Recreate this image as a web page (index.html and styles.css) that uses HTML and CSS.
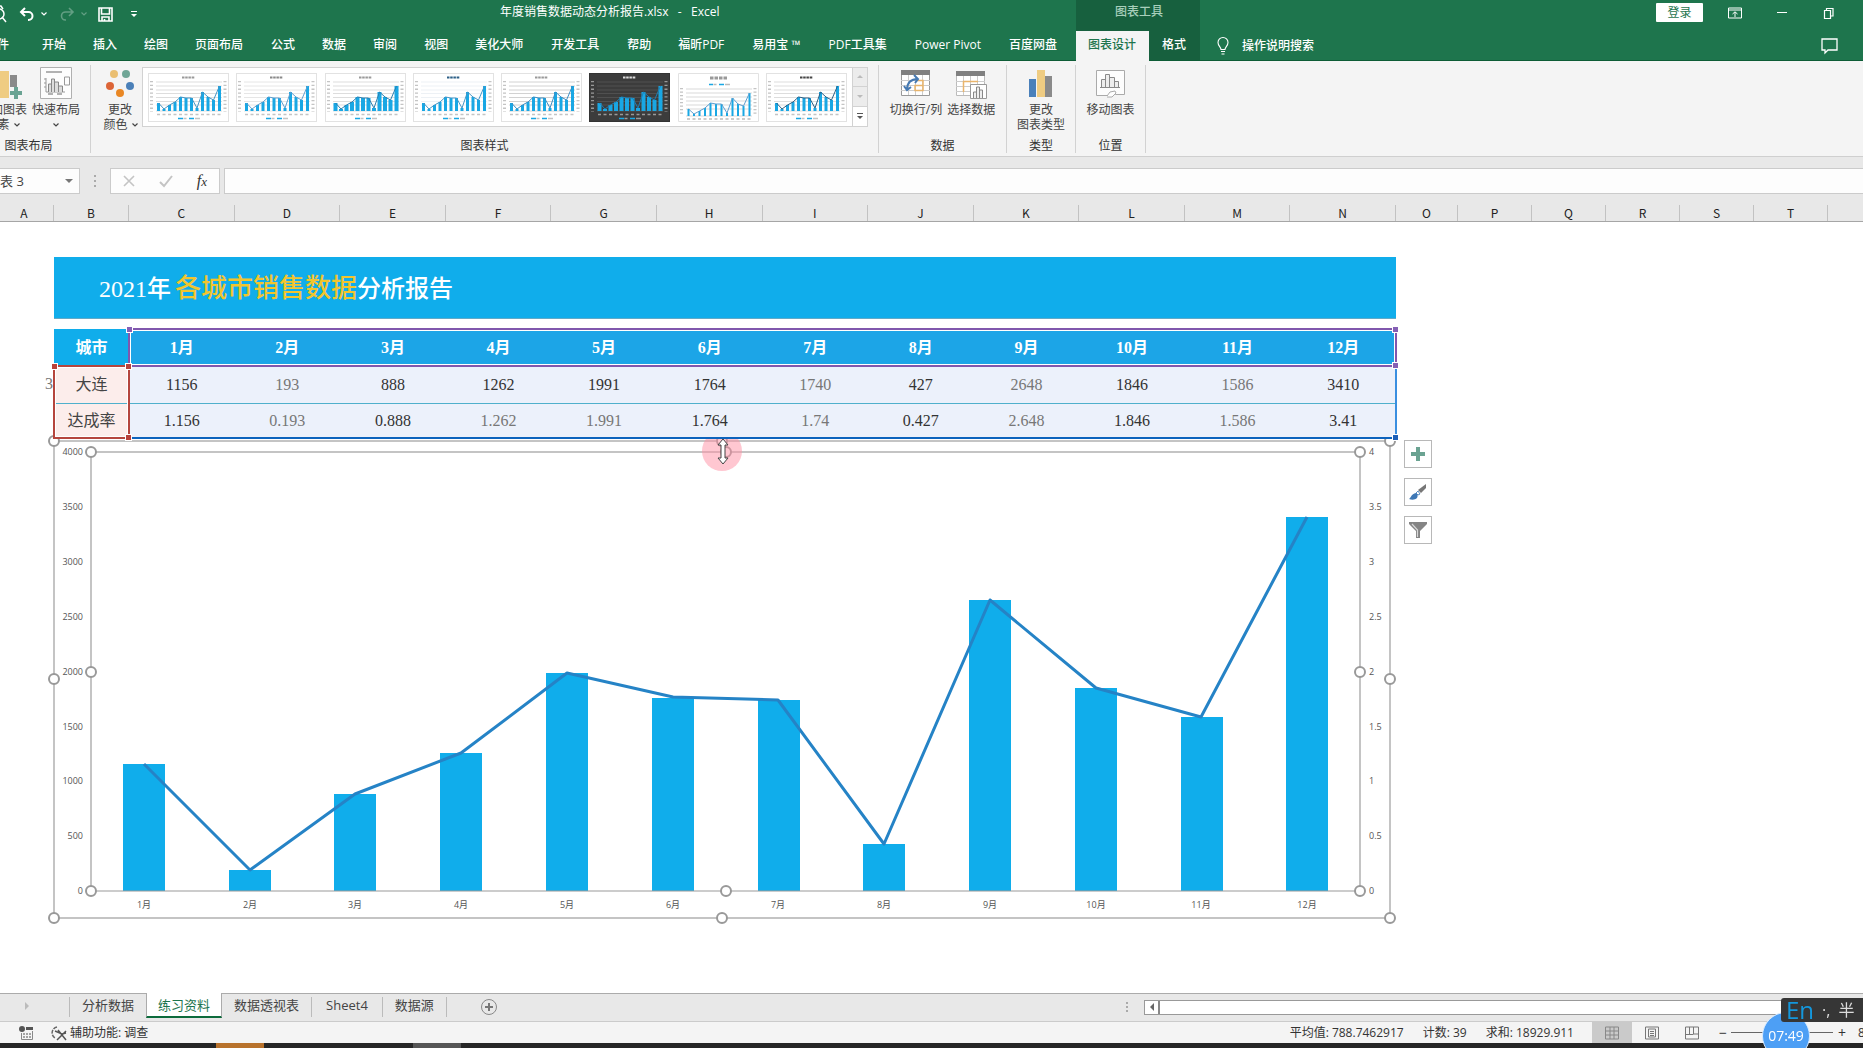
FILE: index.html
```html
<!DOCTYPE html>
<html lang="zh-CN">
<head>
<meta charset="utf-8">
<title>年度销售数据动态分析报告.xlsx - Excel</title>
<link rel="stylesheet" href="styles.css">
</head>
<body>
<svg class="defs" aria-hidden="true">
  <symbol id="chev" viewBox="0 0 8 8"><path d="M1.500 2.500 4 5l2.500-2.500" fill="none" stroke="currentColor" stroke-width="1.200"/></symbol>
  <symbol id="thumb" viewBox="0 0 81 49">
    <rect x=".5" y=".5" width="80" height="48" style="fill:var(--paper,#fff);stroke:var(--edge,#e2e2e2)"/>
    <path d="M34 4.500h13" stroke-width="2" stroke-dasharray="2.500 .7" style="stroke:var(--title,#999)"/>
    <g style="stroke:var(--grid,#d4d4d4)" stroke-width=".8"><path d="M8 9h66M8 13h66M8 17h66M8 20.500h66M8 24.500h66M8 28.500h66M8 32h66M8 38h66"/></g>
    <path d="M3.500 8v31M77 8v31" stroke-width="3" stroke-dasharray="1.300 2.500" style="stroke:var(--ticks,#c4c4c4)"/>
    <path d="M10.500 38v-8M16 38v-2M21.500 38v-6M27 38v-9M32.500 38V24M38 38V25M43.500 38V25M49 38v-3M54.500 38V19M60 38V24M65.500 38V27M71.500 38V13" style="stroke:#19a7e4;stroke-width:var(--bar,3)"/>
    <path d="m10.500 30 5.500 6 5.500-4 5.500-3 5.500-5 5.500 1h5.500L49 35l5.500-16L60 24l5.500 3 6-14" fill="none" style="stroke:var(--line,#4596c6)"/>
    <path d="M9 41.500h64" stroke-width="1.500" stroke-dasharray="3 2.500" style="stroke:var(--ticks,#c4c4c4)"/>
    <path d="M30 45.500h5M41 45.500h5" stroke="#19a7e4" stroke-width="1.500"/><path d="M35.500 45.500h3M47 45.500h5" stroke-width="1.500" style="stroke:var(--ticks,#c4c4c4)"/>
  </symbol>
</svg>

<header class="app-bar">
  <div class="title-row">
    <div class="quick">
      <button class="q-find" aria-label="打印预览"><svg width="6" height="20"><circle cx="-1" cy="10" r="5" fill="none" stroke="#fff" stroke-width="1.500"/><path d="m2 13 4 5M-2 2h3l2 3" stroke="#fff" stroke-width="1.500" fill="none"/></svg></button>
      <button class="q-undo" aria-label="撤销"><svg width="16" height="14" viewBox="0 0 16 14"><path d="M6 1 2 5l4 4M2 5h7.500a4 4 0 0 1 0 8H9" fill="none" stroke="currentColor" stroke-width="2"/></svg></button>
      <button class="q-menu" aria-label="撤销列表"><svg width="8" height="8"><use href="#chev"/></svg></button>
      <button class="q-redo dim" aria-label="恢复"><svg width="16" height="14" viewBox="0 0 16 14"><path d="m10 1 4 4-4 4M14 5H6.500a4 4 0 0 0 0 8H7" fill="none" stroke="currentColor" stroke-width="1.600"/></svg></button>
      <button class="q-menu dim" aria-label="恢复列表"><svg width="8" height="8"><use href="#chev"/></svg></button>
      <button class="q-save" aria-label="保存"><svg width="15" height="15" viewBox="0 0 15 15"><path d="M1 1h13v13H1zM3.500 1v6h8V1M4 14v-4h7v4M6.500 12v2" fill="none" stroke="currentColor" stroke-width="1.600"/></svg></button>
      <button class="q-custom" aria-label="自定义快速访问工具栏"><svg width="8" height="8" viewBox="0 0 8 8"><path d="M1 1.500h6" stroke="currentColor"/><path d="M1 4h6L4 7z" fill="currentColor"/></svg></button>
    </div>
    <h1 class="doc-title">年度销售数据动态分析报告.xlsx &nbsp;&nbsp;- &nbsp;&nbsp;Excel</h1>
    <div class="window-tools">
      <button class="login">登录</button>
      <button aria-label="功能区显示选项"><svg width="14" height="12" viewBox="0 0 14 12"><path d="M.5 1h13v10H.5zM.5 3h13M7 10V5M4.500 7 7 4.800 9.500 7" fill="none" stroke="currentColor"/></svg></button>
      <button aria-label="最小化"><svg width="14" height="12"><path d="M2 5.500h10" stroke="currentColor"/></svg></button>
      <button aria-label="还原"><svg width="14" height="12" viewBox="0 0 14 12"><path d="M2.500 3.500h6v8h-6zM4.500 3V1.500h6.500V9H9" fill="none" stroke="currentColor" stroke-width="1.200"/></svg></button>
    </div>
  </div>
  <nav class="tabs">
    <a class="file" href="#">文件</a><a href="#">开始</a><a href="#">插入</a><a href="#">绘图</a><a class="wide" href="#">页面布局</a><a href="#">公式</a><a href="#">数据</a><a href="#">审阅</a><a href="#">视图</a><a class="wide" href="#">美化大师</a><a class="wide" href="#">开发工具</a><a href="#">帮助</a><a class="wide" href="#">福昕PDF</a><a class="wide" href="#">易用宝 ™</a><a class="wide" href="#">PDF工具集</a><a class="wide" href="#">Power Pivot</a><a class="wide" href="#">百度网盘</a>
    <div class="context"><span class="context-name">图表工具</span><a class="active" href="#">图表设计</a><a href="#">格式</a></div>
    <button class="tell"><svg width="14" height="18" viewBox="0 0 14 18"><path d="M5 12.500c0-2.500-3-3.500-3-7a5 5 0 0 1 10 0c0 3.500-3 4.500-3 7zM5 14.500h4M5.500 17h3" fill="none" stroke="currentColor" stroke-width="1.100"/></svg>操作说明搜索</button>
    <button class="comment" aria-label="批注"><svg width="17" height="16" viewBox="0 0 17 16"><path d="M1 1h15v11H7l-3 3v-3H1z" fill="none" stroke="currentColor" stroke-width="1.300"/></svg></button>
  </nav>
</header>

<section class="ribbon">
  <div class="group g-layout">
    <div class="tools">
      <button class="tool t-add"><svg width="38" height="32" viewBox="0 0 38 32"><path d="M13 4h12v27H13z" fill="#efcc82"/><path d="M26 8h7v12h-7z" fill="#8a8a8a"/><path d="M32 20v12M26 26h12" stroke="#6aa393" stroke-width="4"/></svg><span>添加图表</span><span>元素 <svg width="8" height="8"><use href="#chev"/></svg></span></button>
      <button class="tool"><svg width="32" height="32" viewBox="0 0 32 32"><path d="M.5.5h31v31H.5z" fill="#fdfdfd" stroke="#b0b0b0"/><path d="M6 5h16M8 27h5M17 27h5" stroke="#999" stroke-width="1.500"/><path d="M6 25h19M6 25V11M4 12h2M4 16h2M4 20h2M24.500 10h5v8h-5z" fill="none" stroke="#999"/><path d="M8.500 25v-8h3v8M11.500 25V12h3v13M14.500 25V15h4v10M18.500 25v-6h4v6" fill="#ddd" stroke="#888"/></svg><span>快速布局</span><span><svg width="8" height="8"><use href="#chev"/></svg></span></button>
    </div>
    <div class="group-name">图表布局</div>
  </div>
  <div class="group g-styles">
    <div class="tools">
      <button class="tool t-color"><svg width="32" height="32" viewBox="0 0 32 32"><circle cx="10" cy="7" r="4" fill="#eabf72"/><circle cx="22" cy="7" r="4" fill="#70a696"/><circle cx="6" cy="19" r="4" fill="#dc6537"/><circle cx="26" cy="19" r="4" fill="#4b80b8"/><circle cx="16" cy="26" r="4" fill="#e98724"/></svg><span>更改</span><span>颜色 <svg width="8" height="8"><use href="#chev"/></svg></span></button>
      <div class="gallery">
        <div class="thumbs">
          <button aria-label="样式 1"><svg><use href="#thumb"/></svg></button>
          <button class="s2" aria-label="样式 2"><svg><use href="#thumb"/></svg></button>
          <button class="s3" aria-label="样式 3"><svg><use href="#thumb"/></svg></button>
          <button class="s4" aria-label="样式 4"><svg><use href="#thumb"/></svg></button>
          <button class="s5" aria-label="样式 5"><svg><use href="#thumb"/></svg></button>
          <button class="s6" aria-label="样式 6"><svg><use href="#thumb"/></svg></button>
          <button class="s7" aria-label="样式 7"><svg viewBox="0 0 81 49"><path d="M.5.500h80v48H.5z" fill="#fff" stroke="#e2e2e2"/><path d="M32 5h18" stroke="#999" stroke-width="3" stroke-dasharray="3.500 1"/><path d="M31 11.500h4M41 11.500h5" stroke="#19a7e4" stroke-width="1.500"/><path d="M35.500 11.500h3M47 11.500h5" stroke="#bbb" stroke-width="1.500"/><path d="M8 16h66M8 20h66M8 24h66M8 28h66M8 32h66M8 36h66M8 43h66" stroke="#d9d9d9"/><path d="M3.500 15v28M77 15v28" stroke="#c4c4c4" stroke-width="3" stroke-dasharray="1.300 2.200"/><path d="M10.500 43v-7M16 43v-2M21.500 43v-5M27 43v-8M32.500 43V30M38 43V31M43.500 43V31M49 43v-3M54.500 43V25M60 43V31M65.500 43V33M71.500 43V20" stroke="#19a7e4" stroke-width="2"/><path d="m10.500 36 5.500 5 5.500-3 5.500-3 5.500-5 5.500 1h5.500l5.500 9 5.500-15 5.500 6 5.500 2 6-13" fill="none" stroke="#5f9fd0"/><path d="M9 46h64" stroke="#bbb" stroke-width="1.500" stroke-dasharray="3 2.500"/></svg></button>
          <button class="s8" aria-label="样式 8"><svg><use href="#thumb"/></svg></button>
        </div>
        <div class="gallery-nav">
          <button class="off" aria-label="上一行"><svg width="8" height="8"><path d="M1 5h6L4 2z" fill="#bbb"/></svg></button>
          <button class="off" aria-label="下一行"><svg width="8" height="8"><path d="M1 3h6L4 6z" fill="#bbb"/></svg></button>
          <button aria-label="其他"><svg width="8" height="8"><path d="M1 1.500h6" stroke="#555"/><path d="M1 4h6L4 7z" fill="#555"/></svg></button>
        </div>
      </div>
    </div>
    <div class="group-name">图表样式</div>
  </div>
  <div class="group g-data">
    <div class="tools">
      <button class="tool"><svg width="32" height="32" viewBox="0 0 32 32"><path d="M1.500 3.500h28v25h-28z" fill="#fff" stroke="#999"/><path d="M1 3h29v5H1z" fill="#808080"/><path d="M1 13.500h29M1 18.500h29M1 23.500h29M8.500 8v20M15.500 8v20M22.500 8v20" stroke="#ccc"/><path d="M16 13.500h7v10h-8v-5h8" fill="none" stroke="#e9b56c" stroke-width="1.500"/><path d="M7 23c0-7 3-11 11-11M4 19l3 4 4-3M14 8l4 4-3 4" fill="none" stroke="#4679b2" stroke-width="2"/></svg><span>切换行/列</span></button>
      <button class="tool"><svg width="32" height="32" viewBox="0 0 32 32"><path d="M1.500 4.500h28v24h-28z" fill="#fff" stroke="#bbb"/><path d="M1 4h29v5H1z" fill="#808080"/><path d="M1 14.500h29M1 19.500h29M1 24.500h29M8.500 9v19M15.500 9v19M22.500 9v19" stroke="#ccc"/><path d="M8.500 25V14.500H23" fill="none" stroke="#e9b56c" stroke-width="1.500"/><path d="M15.500 17.500h16v14h-16z" fill="#fff" stroke="#999"/><path d="M18.500 31v-6h3v6M21.500 31V20h3v11M24.500 31v-8h3v8" fill="#eee" stroke="#888"/></svg><span>选择数据</span></button>
    </div>
    <div class="group-name">数据</div>
  </div>
  <div class="group g-type">
    <div class="tools"><button class="tool"><svg width="32" height="32" viewBox="0 0 32 32"><path d="M4 12h7v18H4z" fill="#4a80ba"/><path d="M12 3h8v27h-8z" fill="#efcc82"/><path d="M20 9h7v21h-7z" fill="#8a8a8a"/></svg><span>更改</span><span>图表类型</span></button></div>
    <div class="group-name">类型</div>
  </div>
  <div class="group g-place">
    <div class="tools"><button class="tool"><svg width="32" height="32" viewBox="0 0 32 32"><path d="M2.500 3.500h28v24h-9l-3-2-4 3h-12z" fill="#fdfdfd" stroke="#aaa"/><path d="M7.500 20.500v-8h4v8M11.500 20.500v-13h4v13M15.500 20.500v-10h5v10M20.500 20.500v-6h4v6zM6 20.500h20" fill="#eee" stroke="#8a8a8a"/><path d="m13 29 3-4 5-1 1 2-4 4h-5" fill="#fff" stroke="#aaa"/></svg><span>移动图表</span></button></div>
    <div class="group-name">位置</div>
  </div>
</section>

<section class="formula-row">
  <div class="name-box"><input aria-label="名称框" value="表 3"><svg width="8" height="8"><path d="M0 2h8L4 6z" fill="#777"/></svg></div>
  <svg class="dots" width="4" height="14"><path d="M2 1v2M2 6v2M2 11v2" stroke="#aaa" stroke-width="2"/></svg>
  <div class="formula-tools">
    <button aria-label="取消"><svg width="12" height="12"><path d="m1 1 10 10M11 1 1 11" stroke="#c4c4c4" stroke-width="1.600"/></svg></button>
    <button aria-label="输入"><svg width="14" height="12"><path d="m1 7 4 4 8-10" fill="none" stroke="#c4c4c4" stroke-width="2"/></svg></button>
    <button class="fx" aria-label="插入函数">f<small>x</small></button>
  </div>
  <input class="formula" aria-label="编辑栏">
</section>

<div class="columns">
  <span class="c-a">A</span><span class="c-b">B</span>
  <div class="c-months"><span>C</span><span>D</span><span>E</span><span>F</span><span>G</span><span>H</span><span>I</span><span>J</span><span>K</span><span>L</span><span>M</span><span>N</span></div>
  <span class="c-o">O</span><span class="c-p">P</span><span class="c-p">Q</span><span class="c-p">R</span><span class="c-p">S</span><span class="c-p">T</span><span class="c-end"></span>
</div>

<main class="sheet">
  <div class="report">
    <h2 class="banner">2021年<em>各城市销售数据</em>分析报告</h2>
    <div class="table-wrap">
      <table>
        <thead><tr><th class="city">城市</th><th>1月</th><th>2月</th><th>3月</th><th>4月</th><th>5月</th><th>6月</th><th>7月</th><th>8月</th><th>9月</th><th>10月</th><th>11月</th><th>12月</th></tr></thead>
        <tbody>
          <tr><th>大连</th><td>1156</td><td class="soft">193</td><td>888</td><td>1262</td><td>1991</td><td>1764</td><td class="soft">1740</td><td>427</td><td class="soft">2648</td><td>1846</td><td class="soft">1586</td><td>3410</td></tr>
          <tr><th>达成率</th><td>1.156</td><td class="soft">0.193</td><td>0.888</td><td class="soft">1.262</td><td class="soft">1.991</td><td>1.764</td><td class="soft">1.74</td><td>0.427</td><td class="soft">2.648</td><td>1.846</td><td class="soft">1.586</td><td>3.41</td></tr>
        </tbody>
      </table>
      <span class="row-hint">3</span>
      <div class="sel blue"><i class="br"></i></div>
      <div class="sel purple"><i class="tl"></i><i class="tr"></i><i class="br"></i></div>
      <div class="sel red"><i class="tl"></i><i class="tr"></i><i class="br"></i></div>
    </div>
    <svg class="chart" viewBox="0 0 1342 490" role="img" aria-label="各月销售数据图">
      <g class="frame"><path d="M0 2h1336v477H0z"/><path d="M37 452V13h1269v439"/></g>
      <g class="bars">
        <rect x="69" y="325" width="42" height="127"/><rect x="175" y="431" width="42" height="21"/><rect x="280" y="355" width="42" height="97"/><rect x="386" y="314" width="42" height="138"/><rect x="492" y="234" width="42" height="218"/><rect x="598" y="259" width="42" height="193"/><rect x="704" y="261" width="42" height="191"/><rect x="809" y="405" width="42" height="47"/><rect x="915" y="161" width="42" height="291"/><rect x="1021" y="249" width="42" height="203"/><rect x="1127" y="278" width="42" height="174"/><rect x="1232" y="78" width="42" height="374"/>
      </g>
      <path class="axis" d="M37 452h1269"/>
      <path class="trend" d="m90 325 106 106 105-76 106-41 106-80 106 24 105 3 106 144 106-244 106 88 105 29 106-200"/>
      <g class="labels left"><text x="29" y="16">4000</text><text x="29" y="71">3500</text><text x="29" y="126">3000</text><text x="29" y="181">2500</text><text x="29" y="236">2000</text><text x="29" y="291">1500</text><text x="29" y="345">1000</text><text x="29" y="400">500</text><text x="29" y="455">0</text></g>
      <g class="labels"><text x="1315" y="16">4</text><text x="1315" y="71">3.5</text><text x="1315" y="126">3</text><text x="1315" y="181">2.5</text><text x="1315" y="236">2</text><text x="1315" y="291">1.5</text><text x="1315" y="345">1</text><text x="1315" y="400">0.5</text><text x="1315" y="455">0</text></g>
      <g class="labels mid"><text x="90" y="469">1月</text><text x="196" y="469">2月</text><text x="301" y="469">3月</text><text x="407" y="469">4月</text><text x="513" y="469">5月</text><text x="619" y="469">6月</text><text x="724" y="469">7月</text><text x="830" y="469">8月</text><text x="936" y="469">9月</text><text x="1042" y="469">10月</text><text x="1147" y="469">11月</text><text x="1253" y="469">12月</text></g>
      <g class="knobs">
        <circle cx="0" cy="2" r="5"/><circle cx="668" cy="2" r="5"/><circle cx="1336" cy="2" r="5"/><circle cx="0" cy="240" r="5"/><circle cx="1336" cy="240" r="5"/><circle cx="0" cy="479" r="5"/><circle cx="668" cy="479" r="5"/><circle cx="1336" cy="479" r="5"/>
        <circle cx="37" cy="13" r="5"/><circle cx="672" cy="13" r="5"/><circle cx="1306" cy="13" r="5"/><circle cx="37" cy="233" r="5"/><circle cx="1306" cy="233" r="5"/><circle cx="37" cy="452" r="5"/><circle cx="672" cy="452" r="5"/><circle cx="1306" cy="452" r="5"/>
      </g>
      <circle cx="668" cy="12" r="20" fill="#ff8fa3" fill-opacity=".5"/>
      <path d="m669 0 5 6h-3v13h3l-5 6-5-6h3V6h-3z" fill="#fff" stroke="#444"/>
    </svg>
  </div>
  <div class="chart-tools">
    <button aria-label="图表元素"><svg width="16" height="16"><path d="M8 1v14M1 8h14" stroke="#6ba392" stroke-width="4"/></svg></button>
    <button aria-label="图表样式"><svg width="20" height="20"><path d="M18 2v4l-5 5-3-3z" fill="#777"/><path d="m10 9 2 3-2 1-2-2z" fill="#fff" stroke="#5b8cc0"/><path d="M8 11c2 1 2 3 1 5-2 2-5 2-8 1 2-1 2-5 7-6z" fill="#3e78b6"/></svg></button>
    <button aria-label="图表筛选器"><svg width="20" height="20"><path d="M1 2h18v2l-7 7v7H8v-7L1 4z" fill="#858585"/><path d="m4 4 5.500 6v7" fill="none" stroke="#d8d8d8" stroke-width="1.200"/></svg></button>
  </div>
</main>

<nav class="sheet-tabs">
  <span class="nav-arrow"><svg width="6" height="8"><path d="m1 0 4 4-4 4z" fill="#bbb"/></svg></span>
  <a class="first" href="#">分析数据</a><a class="active" href="#">练习资料</a><a href="#">数据透视表</a><a class="latin" href="#">Sheet4</a><a href="#">数据源</a>
  <button class="new-sheet" aria-label="新工作表"><svg width="18" height="18"><circle cx="9" cy="9" r="7.500" fill="none" stroke="#888"/><path d="M9 5v8M5 9h8" stroke="#777" stroke-width="2"/></svg></button>
  <div class="hscroll"><svg width="4" height="12"><path d="M2 1v2M2 5v2M2 9v2" stroke="#aaa" stroke-width="2"/></svg><div class="track"><button aria-label="向左滚动"><svg width="6" height="8"><path d="M5 0 1 4l4 4z" fill="#666"/></svg></button></div></div>
</nav>

<footer class="status">
  <svg class="macro" width="15" height="14"><circle cx="3" cy="3" r="3" fill="#555"/><path d="M7 1h7v3H7z" fill="#555"/><path d="M2.500 7v6.500h11V5" fill="none" stroke="#888"/><path d="M4 8h8M4 11h8" stroke="#888" stroke-width="1.500" stroke-dasharray="2 1"/></svg>
  <button class="access"><svg width="18" height="16"><path d="M7 2A6 6 0 0 0 5 13" fill="none" stroke="#666" stroke-width="1.500" stroke-dasharray="4 1"/><path d="m8 5 8 10M16 6 7 15M5 6l7 3 4-1" fill="none" stroke="#555" stroke-width="1.500"/></svg>辅助功能: 调查</button>
  <div class="stats"><span>平均值: 788.7462917</span><span>计数: 39</span><span>求和: 18929.911</span></div>
  <div class="views">
    <button class="on" aria-label="普通"><svg width="14" height="14"><path d="M.5 1h13v12H.5zM.5 5h13M.5 9h13M5 1v12M9 1v12" fill="none" stroke="#888"/></svg></button>
    <button aria-label="页面布局"><svg width="14" height="14"><path d="M.5 1h13v12H.5zM3.500 3h7v8h-7zM5 5.500h4M5 7.500h4M5 9.500h4" fill="none" stroke="#777"/></svg></button>
    <button aria-label="分页预览"><svg width="14" height="14"><path d="M.5 1h13v12H.5zM4.500 1v7M8.500 1v7h5M.5 8.500h8" fill="none" stroke="#777"/></svg></button>
  </div>
  <div class="zoom"><button aria-label="缩小">−</button><i></i><button aria-label="放大">+</button><span>80%</span></div>
</footer>
<div class="taskbar"><i></i><b></b></div>
<div class="timer">07:49</div>
<div class="ime"><b>En</b><span>·,</span><span>半</span></div>
</body>
</html>
```
FILE: styles.css
```css
* { box-sizing: border-box; }
body { margin: 0; min-height: 100vh; display: flex; flex-direction: column; overflow: hidden; background: #fff; color: #444; font: 12px/15px "Open Sans", "Noto Sans CJK SC", sans-serif; }
button { margin: 0; padding: 0; border: 0; background: none; color: inherit; font: inherit; display: flex; align-items: center; justify-content: center; }
input { border: 0; outline: 0; padding: 0; background: none; font: inherit; color: inherit; min-width: 0; }
a { color: inherit; text-decoration: none; }
svg { flex: none; overflow: visible; }
.defs { position: absolute; width: 0; height: 0; }

/* title bar and tabs */
.app-bar { background: #1e754d; color: #fff; border-bottom: 1px solid #0d5c36; }
.title-row { height: 31px; display: grid; grid-template-columns: 500px 1fr auto; padding-right: 27px; }
.quick { display: flex; align-items: center; height: 28px; }
.q-undo { margin-left: 13px; }
.q-menu { margin-left: 5px; }
.q-redo { margin-left: 11px; }
.q-save { margin-left: 10px; }
.q-custom { margin-left: 17px; }
.dim { opacity: .3; }
.doc-title { margin: 0; font-size: 12px; font-weight: 400; line-height: 23px; }
.window-tools { display: flex; align-items: center; gap: 33px; height: 25px; }
.window-tools .login { width: 47px; height: 19px; margin-right: -8px; background: #fff; color: #1e754d; border-radius: 1px; }
.tabs { display: flex; height: 29px; gap: 1px; font-weight: 500; }
.tabs a { padding: 0 13px; line-height: 28px; white-space: nowrap; }
.tabs .wide { padding-right: 14px; }
.tabs .file { margin-left: -28px; padding-right: 19px; }
.context { position: relative; display: flex; margin-left: 4px; background: #17603e; }
.context-name { position: absolute; left: 0; right: 0; bottom: 100%; height: 31px; line-height: 23px; padding-left: 2px; text-align: center; background: #17603e; color: #a8cfbb; }
.context .active { background: #f4f4f4; color: #1e754d; margin-bottom: -1px; padding: 0 13px 0 12px; }
.context a:last-child { padding-right: 14px; }
.tell { gap: 12px; margin-left: 15px; }
.comment { margin: 0 25px 0 auto; }

/* ribbon */
.ribbon { display: flex; height: 96px; padding-top: 4px; background: #f4f4f4; border-bottom: 1px solid #cfcfcf; }
.group { height: 88px; display: flex; flex-direction: column; justify-content: space-between; border-right: 1px solid #d2d2d2; }
.group-name { text-align: center; color: #333; white-space: nowrap; }
.tools { display: flex; justify-content: center; padding-top: 2px; }
.tool { flex-direction: column; justify-content: flex-start; white-space: nowrap; }
.tool > svg { margin-bottom: 3px; }
.tool span { height: 15px; }
.g-layout { width: 91px; }
.g-layout .tools { justify-content: flex-end; gap: 5px; padding-right: 10px; }
.g-layout .group-name { padding-right: 33px; }
.g-styles { width: 788px; }
.t-color { width: 50px; padding-left: 8px; }
.t-color > span:last-child { padding-left: 2px; }
.g-styles .tools { justify-content: flex-start; gap: 1px; }
.g-data { width: 128px; }
.g-data .tools { gap: 5px; }
.g-type { width: 69px; }
.g-place { width: 70px; }
.gallery { width: 726px; height: 60px; display: flex; background: #fff; border: 1px solid #d2d2d2; }
.thumbs { flex: 1; display: flex; align-items: center; justify-content: space-between; padding: 0 5px; }
.thumbs svg { width: 81px; height: 49px; }
.gallery-nav { width: 15px; display: grid; grid-template-rows: 1fr 1fr 1fr; border-left: 1px solid #d2d2d2; }
.gallery-nav .off { background: #ececec; border-bottom: 1px solid #d2d2d2; }
.s2 { --line: #5f9fd0; --title: #888; --grid: #e0e0e0; }
.s3 { --bar: 4; --line: #2a7fb0; }
.s4 { --title: #2c5f86; --grid: #e8eef2; }
.s5 { --grid: #c6c6c6; --line: #3d8fc4; }
.s6 { --paper: #3c3c3c; --edge: #333; --grid: #555; --title: #ddd; --ticks: #999; --line: #1c7fb5; --bar: 4; }
.s8 { --title: #444; --line: #2b5f85; }

/* formula bar */
.formula-row { display: flex; align-items: center; padding: 11px 0; background: #e8e8e8; }
.name-box { width: 80px; height: 26px; display: flex; align-items: center; padding-right: 6px; background: #fdfdfd; border: 1px solid #cbcbcb; border-left: 0; font-size: 13px; }
.name-box input { flex: 1; }
.dots { margin: 0 13px; }
.formula-tools { width: 110px; height: 26px; display: flex; align-items: center; justify-content: space-around; background: #fdfdfd; border: 1px solid #cbcbcb; }
.fx { align-items: baseline; font: italic 16px "Liberation Serif", serif; color: #333; }
.fx small { font-size: 13px; }
.formula { flex: 1; height: 26px; margin-left: 4px; background: #fdfdfd; border: 1px solid #cbcbcb; border-right: 0; }

/* column letters */
.columns { display: flex; align-items: flex-end; height: 17px; background: #e8e8e8; border-bottom: 1px solid #a6a6a6; font: 12px/16px "Noto Sans CJK SC", sans-serif; color: #222; }
.columns span { height: 16px; text-align: center; border-right: 1px solid #c2c2c2; }
.columns .c-a { width: 54px; padding-right: 5px; }
.c-b { width: 75px; }
.c-months { flex: 1; display: grid; grid-template-columns: repeat(12, 1fr); }
.c-o { width: 62px; }
.c-p { width: 74px; }
.columns .c-end { width: 35px; border: 0; }

/* sheet */
.sheet { flex: 1; display: grid; grid-template-columns: 54px 1fr 467px; }
.report { grid-column: 2; padding-top: 35px; }
.banner { margin: 0 0 10px; height: 62px; padding-left: 45px; background: #10adeb; color: #fff; font: 500 24px/64px "Liberation Serif", "Noto Sans CJK SC", serif; border-bottom: 1px solid #63a9c6; }
.banner em { margin-left: 4px; font-style: normal; font-size: 26px; color: #f2c52e; }
.table-wrap { position: relative; }
table { width: 100%; border-collapse: collapse; table-layout: fixed; font: 16px/20px "Liberation Serif", "Noto Sans CJK SC", serif; text-align: center; }
th, td { padding: 0; height: 36px; }
thead th { height: 38px; background: #1ca5e7; color: #fff; font-weight: 700; }
thead .city { width: 75px; background: #10adeb; }
tbody th { background: #fcedeb; font-weight: 400; color: #444; }
tbody td { background: #ecf1fb; color: #333; }
tbody .soft { color: #777; }
tbody tr:first-child > * { border-bottom: 1px solid #4fb0cc; }
.row-hint { position: absolute; right: 100%; top: 45px; padding-right: 1px; font: 16px/20px "Liberation Serif", serif; color: #777; }
.sel { position: absolute; }
.sel i { position: absolute; width: 7px; height: 7px; border: 1px solid #fff; background: currentColor; }
.tl { left: -4px; top: -4px; }
.tr { right: -4px; top: -4px; }
.br { right: -4px; bottom: -4px; }
.blue { left: 75px; right: -1px; top: 38px; bottom: 0; border: 2px solid #3a8fe0; border-width: 0 2px 2px 0; border-bottom-color: #0c63bd; color: #1c5fb8; }
.purple { left: 74px; right: -1px; top: -1px; height: 39px; border: 2px solid #8157ad; color: #8560b5; outline: 1px solid #fff; outline-offset: -3px; }
.red { left: -1px; width: 77px; top: 36px; bottom: 0; border: 2px solid #b5453d; color: #b8423b; outline: 1px solid #fff; outline-offset: -3px; }
.chart { display: block; width: 100%; height: auto; }
.frame { fill: none; stroke: #c4c4c4; stroke-width: 2px; }
.bars { fill: #10adeb; }
.axis { stroke: #999; stroke-width: 1px; }
.trend { fill: none; stroke: #2583c6; stroke-width: 3px; stroke-linejoin: round; }
.labels { font-size: 9px; fill: #555; }
.left { text-anchor: end; }
.mid { text-anchor: middle; }
.knobs { fill: #fff; stroke: #999; stroke-width: 2px; }
.chart-tools { display: flex; flex-direction: column; gap: 10px; padding: 218px 0 0 8px; }
.chart-tools button { width: 28px; height: 28px; border: 1px solid #b8b8b8; background: #fff; }

/* sheet tabs */
.sheet-tabs { display: flex; align-items: flex-start; height: 28px; background: #e8e8e8; border-top: 1px solid #ababab; font-size: 13px; }
.nav-arrow { width: 69px; padding: 4px 0 0 24px; }
.sheet-tabs a { height: 20px; margin-top: 3px; padding: 0 12px; line-height: 16px; white-space: nowrap; border-right: 1px solid #bbb; }
.sheet-tabs .first { border-left: 1px solid #bbb; border-right: 0; }
.sheet-tabs .active { height: 25px; margin-top: -1px; line-height: 24px; padding: 0 11px; background: #fff; color: #1e754d; border: 1px solid #ababab; border-width: 0 1px 2px; border-bottom: 2px solid #0d6b3c; }
.sheet-tabs .latin { padding: 0 14px; }
.new-sheet { margin: 4px 0 0 33px; }
.hscroll { display: flex; align-items: center; gap: 15px; width: 738px; height: 26px; margin-left: auto; }
.track { flex: 1; height: 15px; background: #fff; border: 1px solid #999; }
.track button { width: 15px; height: 13px; border-right: 2px solid #888; }

/* status bar */
.status { display: flex; align-items: center; height: 22px; background: #f4f4f4; border-top: 1px solid #cbcbcb; color: #333; white-space: nowrap; }
.macro { margin-left: 19px; }
.access { margin-left: 16px; gap: 2px; }
.stats { display: flex; gap: 19px; margin: 0 18px 0 auto; }
.views { display: flex; height: 100%; }
.views button { width: 40px; }
.views .on { background: #cacaca; }
.zoom { display: flex; align-items: center; width: 151px; padding-left: 7px; overflow: hidden; font-size: 14px; }
.zoom i { width: 102px; height: 1px; margin: 0 5px 0 4px; flex: none; background: #666; }
.zoom span { margin-left: 12px; font-size: 12px; }
.taskbar { display: flex; height: 5px; background: #262626; }
.taskbar i { width: 48px; margin-left: 216px; background: #b8722c; }
.taskbar b { width: 48px; margin-left: 149px; background: #555; }
.timer { position: fixed; right: 53px; bottom: -12px; width: 48px; height: 48px; border: 1px solid #d8ebff; border-radius: 50%; background: #4d9ff5; color: #fff; font-size: 14px; line-height: 45px; text-align: center; }
.ime { position: fixed; right: 0; bottom: 26px; width: 82px; height: 24px; display: flex; align-items: center; gap: 8px; padding-left: 5px; border-radius: 3px 0 0 3px; background: #363636; color: #ddd; font-size: 16px; line-height: 24px; }
.ime b { font-size: 24px; font-weight: 400; color: #1497dc; }
```
